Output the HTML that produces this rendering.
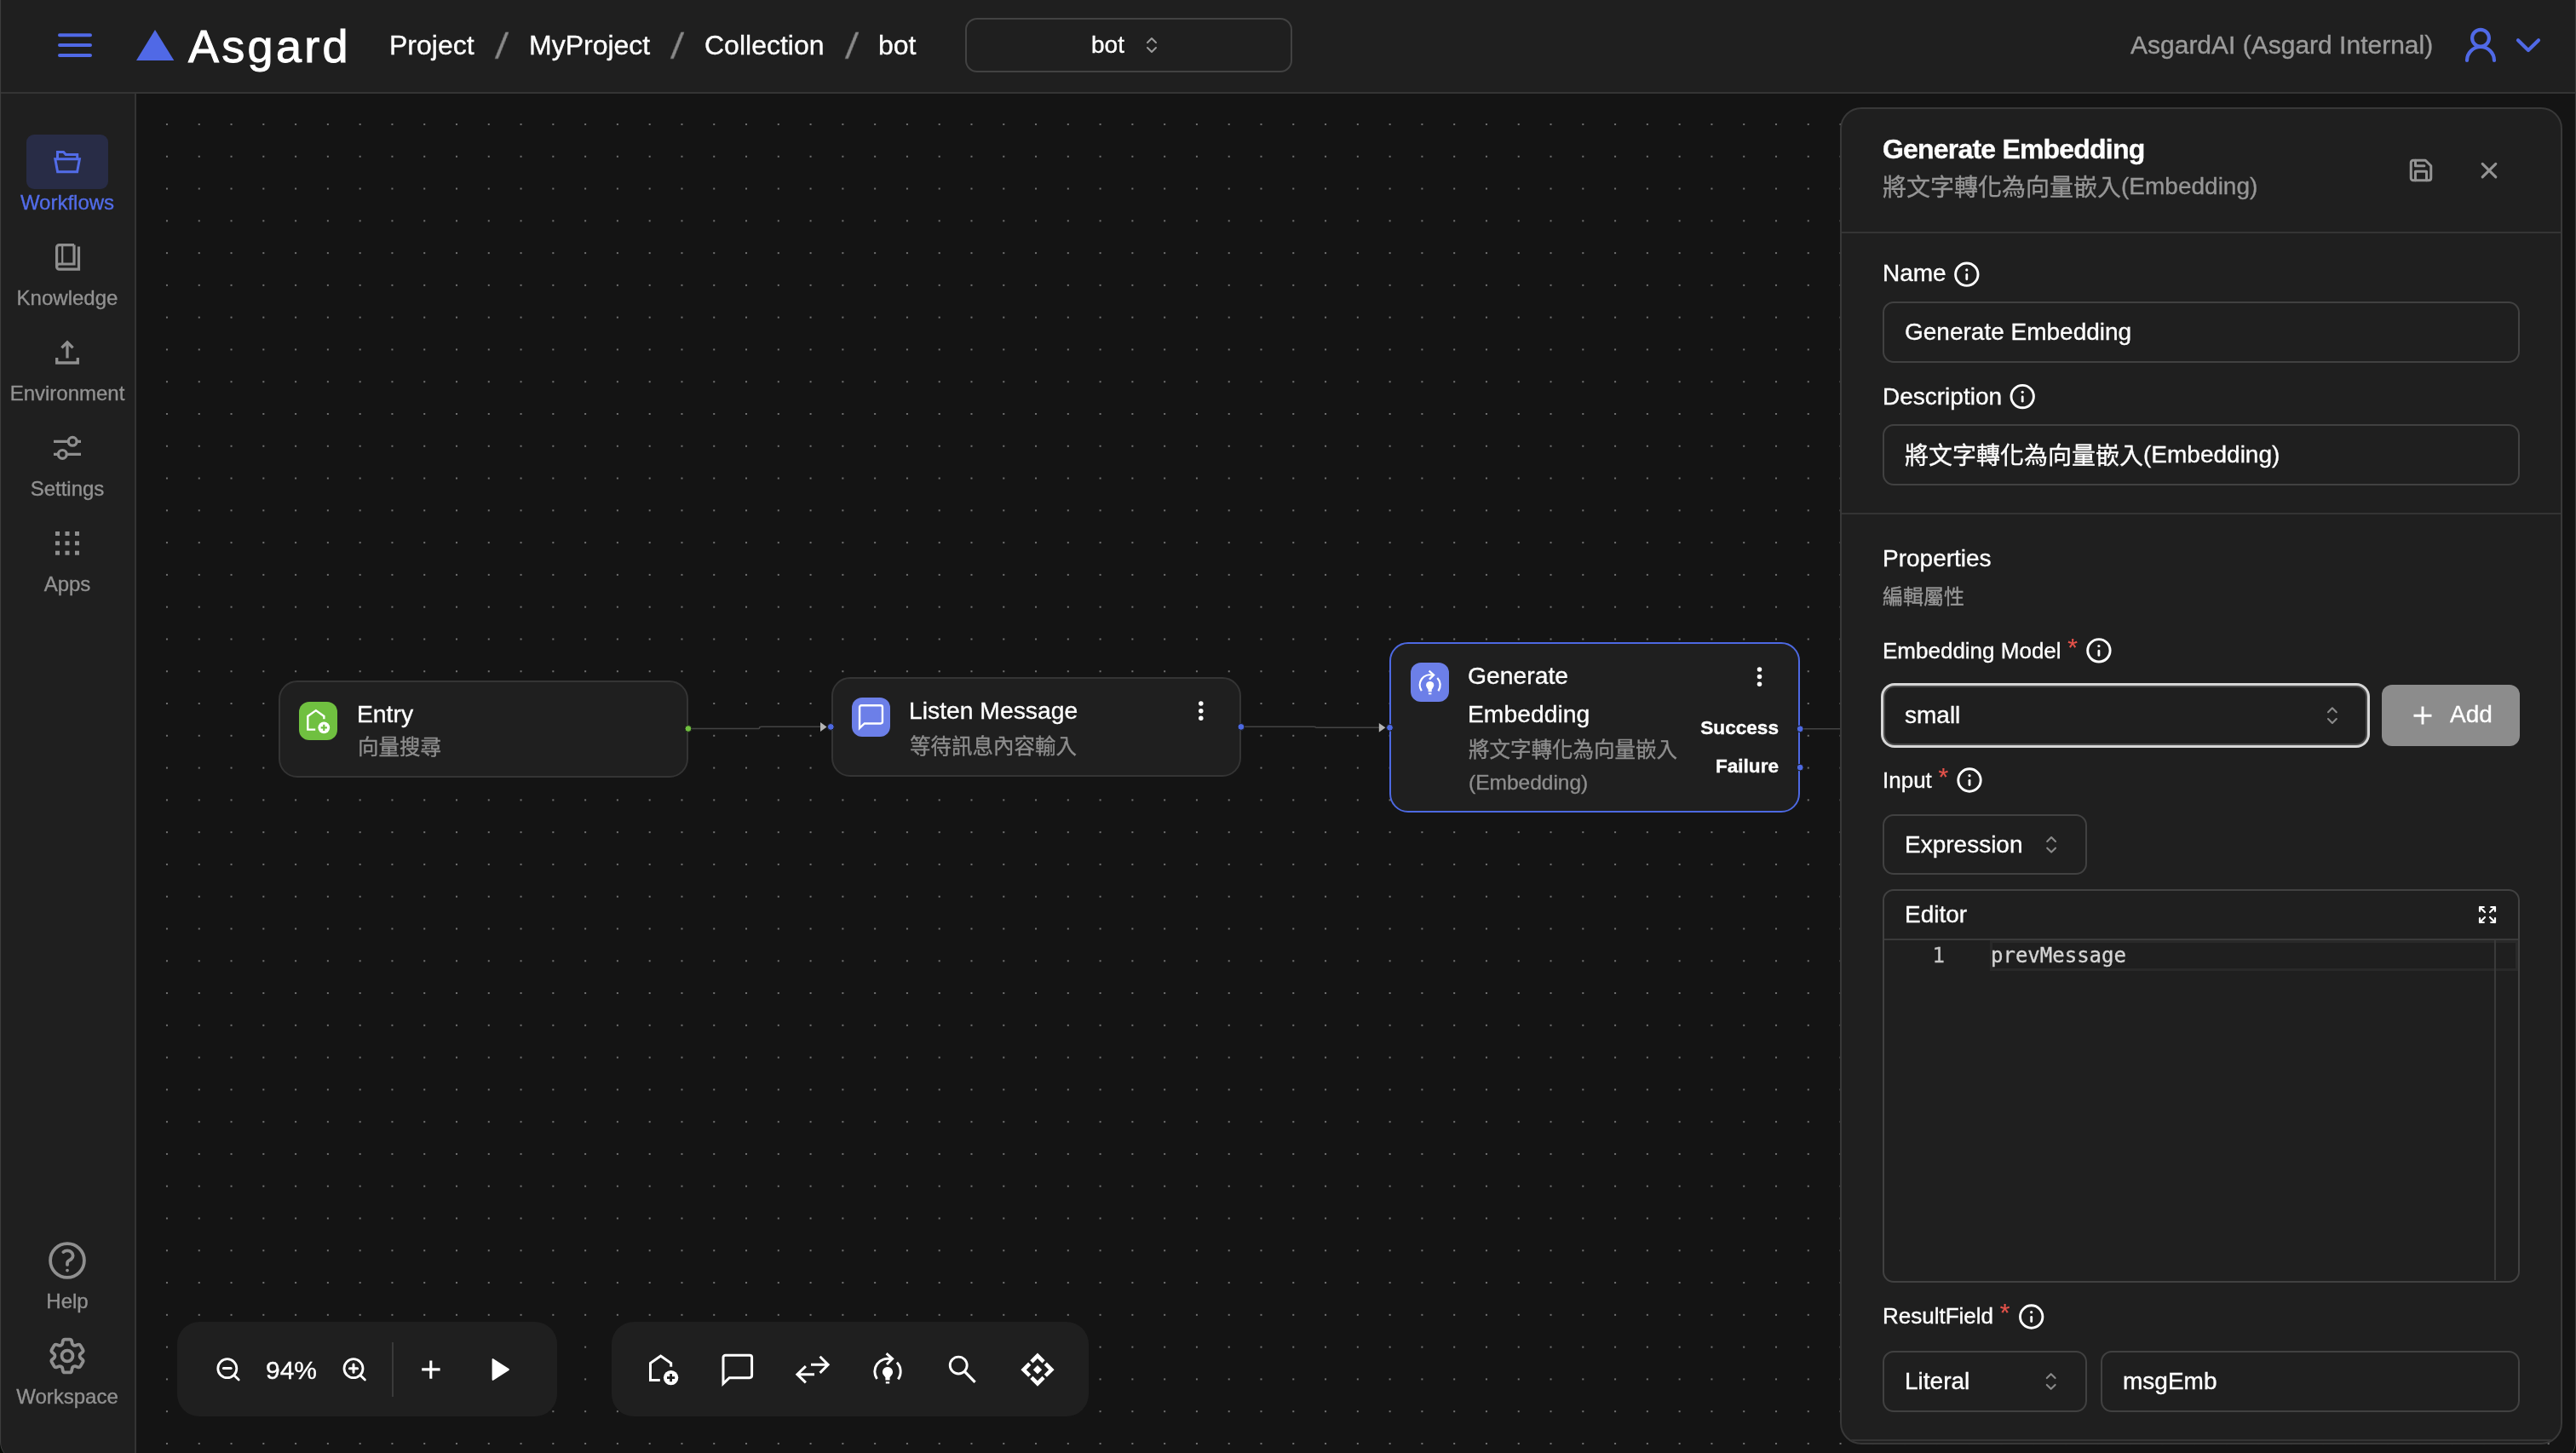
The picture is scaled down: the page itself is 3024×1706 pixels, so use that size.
<!DOCTYPE html>
<html lang="zh-Hant">
<head>
<meta charset="utf-8">
<title>Asgard</title>
<style>
*{box-sizing:border-box;margin:0;padding:0}
html,body{width:3024px;height:1706px;overflow:hidden;background:#141414}
body{position:relative;-webkit-text-stroke:0.35px;font-family:"Liberation Sans","Noto Sans CJK TC",sans-serif;color:#fff;-webkit-font-smoothing:antialiased}
.abs{position:absolute}
.t{position:absolute;white-space:nowrap;line-height:40px;height:40px;will-change:transform}
svg{position:absolute;overflow:visible}
/* header */
#header{position:absolute;left:0;top:0;width:3024px;height:110px;background:#1f1f1f;border-bottom:2px solid #343434}
#sidebar{position:absolute;left:0;top:110px;width:160px;height:1596px;background:#1f1f1f;border-right:2px solid #343434}
#canvas{position:absolute;left:160px;top:110px;width:2864px;height:1596px;background-color:#141414;overflow:hidden}
.bc{font-size:32px;color:#fff}
.sl{font-size:43px;color:#8a8a8a;transform:skewX(-7deg);transform-origin:50% 50%;-webkit-text-stroke:0.5px #8a8a8a;line-height:44px;height:44px}
.nav{will-change:transform;position:absolute;left:0;width:158px;margin-top:1px;text-align:center;font-size:24px;color:#929292;line-height:30px;height:30px}
.gray{color:#9b9b9b}

.node{position:absolute;background:#1f1f1f;border:2px solid #343434;border-radius:22px}
.node.sel{border:2.2px solid #4d69e2}
.nicon{position:absolute;width:45.4px;height:45.4px;border-radius:12px}
.nt{font-size:28.3px;color:#fff}
.nd{font-size:24.5px;color:#8e8e8e}
.nh{font-size:22.6px;font-weight:bold;text-align:right;color:#fff}

.hl{height:2px;background:#343434}
.gray2{color:#969696}
.p28{font-size:28px;color:#fff}
.p26{font-size:26px;color:#fff}
.req{color:#e5534b;font-size:30px;position:relative;top:-2.8px;margin-left:0.5px;-webkit-text-stroke:0.2px #e5534b}
.inp{border:2px solid #414141;border-radius:13px;background:#1f1f1f}
.mono{font-family:"DejaVu Sans Mono","Liberation Mono",monospace;font-size:24px;line-height:40px}
.cj{position:relative;top:1.6px}
</style>
</head>
<body>
<div id="canvas"><svg style="left:0;top:0" width="2864" height="1596"><defs><pattern id="dots" width="37.78" height="37.78" patternUnits="userSpaceOnUse" patternTransform="translate(-2.8 -2.8)"><rect x="0" y="0" width="2" height="2" fill="#6f6f6f"/></pattern></defs><rect width="2864" height="1596" fill="url(#dots)"/></svg></div>
<div id="header"></div>
<div id="sidebar"></div>
<!--HEADER-->
<!-- hamburger -->
<svg style="left:66px;top:37px" width="44" height="32" viewBox="66 37 44 32"><g stroke="#5069e6" stroke-width="4" stroke-linecap="round"><path d="M70 41.2H106M70 53H106M70 64.9H106"/></g></svg>
<!-- logo -->
<svg style="left:158px;top:33px" width="48" height="40" viewBox="158 33 48 40"><path d="M182 35L204.3 71H160Z" fill="#5069e6"/></svg>
<div class="t" id="brand" style="left:220.8px;top:23.6px;font-size:54px;line-height:60px;height:60px;letter-spacing:3.3px;-webkit-text-stroke:1px #fff">Asgard</div>
<div class="t bc" style="left:456.5px;top:33px">Project</div>
<div class="t sl" style="left:583.3px;top:31.5px">/</div>
<div class="t bc" style="left:620.5px;top:33px">MyProject</div>
<div class="t sl" style="left:789.3px;top:31.5px">/</div>
<div class="t bc" style="left:826.5px;top:33px">Collection</div>
<div class="t sl" style="left:994.3px;top:31.5px">/</div>
<div class="t bc" style="left:1030.5px;top:33px">bot</div>
<div class="abs" style="left:1133px;top:21px;width:384px;height:64px;border:2px solid #424242;border-radius:14px"></div>
<div class="t" style="left:1281px;top:33px;font-size:28px">bot</div>
<svg class="ud" style="left:1344px;top:42px" width="16" height="22" viewBox="0 0 16 22"><path d="M3 8L8 3L13 8M3 14L8 19L13 14" fill="none" stroke="#9b9b9b" stroke-width="2" stroke-linecap="round" stroke-linejoin="round"/></svg>
<div class="t gray" style="left:2501px;top:33px;font-size:30px">AsgardAI (Asgard Internal)</div>
<svg style="left:2890px;top:30px" width="44" height="46" viewBox="2890 30 44 46"><g fill="none" stroke="#5069e6" stroke-width="4.2" stroke-linecap="round"><circle cx="2912" cy="44.8" r="9.9"/><path d="M2896 71A16 16 0 0 1 2928 71"/></g></svg>
<svg style="left:2950px;top:40px" width="36" height="26" viewBox="2950 40 36 26"><path d="M2956 47.3L2968 59L2980 47.3" fill="none" stroke="#5069e6" stroke-width="4.2" stroke-linecap="round" stroke-linejoin="round"/></svg>

<!--SIDEBAR-->
<div class="abs" style="left:31px;top:158px;width:96px;height:64px;border-radius:9px;background:#282c46"></div>
<svg style="left:60px;top:172px" width="40" height="36" viewBox="60 172 40 36"><g fill="none" stroke="#526ce8" stroke-width="3"><path d="M67.5 186.5V178.5H74.6L77.2 181.5H90.7V186.5"/><path d="M64.8 186.7H93.4L90.6 201.7H67.6Z"/></g></svg>
<div class="nav" style="top:222px;color:#526ce8">Workflows</div>
<svg style="left:60px;top:282px" width="40" height="40" viewBox="60 282 40 40"><g fill="none" stroke="#8f8f8f"><path stroke-width="3.2" d="M87 287.6H69.6A3 3 0 0 0 66.6 290.6V313.2A3 3 0 0 0 69.6 316.2H92.5V289.5"/><path stroke-width="3.2" d="M87 287.6V310H69.6A3 3 0 0 0 66.6 313"/><path stroke-width="2.2" d="M73.2 288V310"/></g></svg>
<div class="nav" style="top:334px">Knowledge</div>
<svg style="left:60px;top:396px" width="40" height="36" viewBox="60 396 40 36"><g fill="none" stroke="#8f8f8f" stroke-width="3.3"><path d="M66.7 420V426H91.3V420"/><path d="M79 420.5V402.5"/><path d="M72.4 408.4L79 401.8L85.6 408.4"/></g></svg>
<div class="nav" style="top:446px">Environment</div>
<svg style="left:60px;top:508px" width="40" height="36" viewBox="60 508 40 36"><g fill="none" stroke="#8f8f8f" stroke-width="3.2"><path d="M63 518.3H80M90.4 518.3H95"/><circle cx="85.2" cy="518.3" r="4.9"/><path d="M63 533.4H68.2M78.5 533.4H95"/><circle cx="73.3" cy="533.4" r="4.9"/></g></svg>
<div class="nav" style="top:558px">Settings</div>
<svg style="left:60px;top:620px" width="40" height="36" viewBox="60 620 40 36"><g fill="#8f8f8f"><rect x="65" y="624" width="5" height="5"/><rect x="76.5" y="624" width="5" height="5"/><rect x="88" y="624" width="5" height="5"/><rect x="65" y="635.3" width="5" height="5"/><rect x="76.5" y="635.3" width="5" height="5"/><rect x="88" y="635.3" width="5" height="5"/><rect x="65" y="646.7" width="5" height="5"/><rect x="76.5" y="646.7" width="5" height="5"/><rect x="88" y="646.7" width="5" height="5"/></g></svg>
<div class="nav" style="top:670px">Apps</div>
<svg style="left:49px;top:1450px" width="60" height="60" viewBox="49 1450 60 60"><g transform="translate(79 1480) scale(2.21) translate(-12 -12)" fill="none" stroke="#8f8f8f" stroke-width="1.72" stroke-linecap="round" stroke-linejoin="round"><path d="M9.879 7.519c1.171-1.025 3.071-1.025 4.242 0 1.172 1.025 1.172 2.687 0 3.712-.203.179-.43.326-.67.442-.745.361-1.45.999-1.45 1.827v.75M21 12a9 9 0 1 1-18 0 9 9 0 0 1 18 0Zm-9 5.25h.008v.008H12v-.008Z"/></g></svg>
<div class="nav" style="top:1512px">Help</div>
<svg style="left:49px;top:1562px" width="60" height="60" viewBox="49 1562 60 60"><g transform="translate(79 1592) scale(2.16) translate(-12 -12)" fill="none" stroke="#8f8f8f" stroke-width="1.75" stroke-linecap="round" stroke-linejoin="round"><path d="M9.594 3.94c.09-.542.56-.94 1.11-.94h2.593c.55 0 1.02.398 1.11.94l.213 1.281c.063.374.313.686.645.87.074.04.147.083.22.127.325.196.72.257 1.075.124l1.217-.456a1.125 1.125 0 0 1 1.37.49l1.296 2.247a1.125 1.125 0 0 1-.26 1.431l-1.003.827c-.293.241-.438.613-.43.992a7.723 7.723 0 0 1 0 .255c-.008.378.137.75.43.991l1.004.827c.424.35.534.955.26 1.43l-1.298 2.247a1.125 1.125 0 0 1-1.369.491l-1.217-.456c-.355-.133-.75-.072-1.076.124a6.47 6.47 0 0 1-.22.128c-.331.183-.581.495-.644.869l-.213 1.281c-.09.543-.56.94-1.11.94h-2.594c-.55 0-1.019-.398-1.11-.94l-.213-1.281c-.062-.374-.312-.686-.644-.87a6.52 6.52 0 0 1-.22-.127c-.325-.196-.72-.257-1.076-.124l-1.217.456a1.125 1.125 0 0 1-1.369-.49l-1.297-2.247a1.125 1.125 0 0 1 .26-1.431l1.004-.827c.292-.24.437-.613.43-.991a6.932 6.932 0 0 1 0-.255c.007-.38-.138-.751-.43-.992l-1.004-.827a1.125 1.125 0 0 1-.26-1.43l1.297-2.247a1.125 1.125 0 0 1 1.37-.491l1.216.456c.356.133.751.072 1.076-.124.072-.044.146-.086.22-.128.332-.183.582-.495.644-.869l.214-1.28Z"/><path d="M15 12a3 3 0 1 1-6 0 3 3 0 0 1 6 0Z"/></g></svg>
<div class="nav" style="top:1624px">Workspace</div>

<!--NODES-->
<svg style="left:0;top:700px" width="2300" height="300" viewBox="0 700 2300 300">
 <g fill="none" stroke="#444" stroke-width="1.6">
  <path d="M808 855.5H889.5Q891.6 855.5 891.6 854.4T893.7 853.3H965"/>
  <path d="M1457 853.3H1542Q1544.4 853.3 1544.4 853.8T1546.8 854.3H1620"/>
  <path d="M2113 855.8H2161"/>
 </g>
 <path d="M963 848.1L970.6 853.5L963 859Z" fill="#b4b4b4"/>
 <path d="M1618.8 849L1626.4 854.3L1618.8 859.7Z" fill="#b4b4b4"/>
</svg>
<div class="node" style="left:326.5px;top:799.3px;width:481.3px;height:113.4px"></div>
<div class="node" style="left:975.6px;top:794.7px;width:481.3px;height:116.9px"></div>
<div class="node sel" style="left:1631.3px;top:753.9px;width:481.6px;height:200.4px"></div>
<div class="nicon" style="left:351px;top:823.7px;background:#70c040"></div>
<div class="nicon" style="left:999.8px;top:819.3px;background:#6c7fe8"></div>
<div class="nicon" style="left:1655.8px;top:778.4px;background:#6c7fe8"></div>
<div class="t nt" style="left:418.8px;top:818.3px">Entry</div>
<div class="t nd" style="left:419.5px;top:857.5px">向量搜尋</div>
<div class="t nt" style="left:1067.1px;top:814.1px">Listen Message</div>
<div class="t nd" style="left:1067.8px;top:856.5px">等待訊息內容輸入</div>
<div class="t nt" style="left:1723.1px;top:773.1px">Generate</div>
<div class="t nt" style="left:1723.1px;top:818px">Embedding</div>
<div class="t nd" style="left:1723.8px;top:861px">將文字轉化為向量嵌入</div>
<div class="t nd" style="left:1723.8px;top:898.6px">(Embedding)</div>
<div class="t nh" style="left:1960px;width:128px;top:834.5px">Success</div>
<div class="t nh" style="left:1960px;width:128px;top:879.5px">Failure</div>
<svg style="left:0;top:700px" width="2300" height="300" viewBox="0 700 2300 300">
 <g transform="translate(373.60 846.90) scale(0.7870) translate(-779.10 -1608.20)"><g fill="none" stroke="#fff" stroke-width="3"><path d="M774.8 1620.5H763.5V1600.6L775.6 1592L787.7 1600.6V1604.8"/></g><circle cx="787.6" cy="1617.6" r="8.7" fill="#fff"/><path d="M783 1617.6H792.2M787.6 1613V1622.2" stroke="#70c040" stroke-width="2.8" fill="none"/></g> <g transform="translate(1022.50 841.60) scale(0.8000) translate(-865.80 -1607.90)"><path d="M851.6 1591.2H880A2.6 2.6 0 0 1 882.6 1593.8V1615.1A2.6 2.6 0 0 1 880 1617.7H856.2L849 1624.6V1593.8A2.6 2.6 0 0 1 851.6 1591.2Z" fill="none" stroke="#fff" stroke-width="3"/></g> <g transform="translate(1678.60 801.50) scale(0.7870) translate(-1041.90 -1606.90)"><g fill="none" stroke="#fff" stroke-width="2.9"><path d="M1029.49 1619.03A15.2 15.2 0 0 1 1046.19 1595.79"/><path d="M1052.93 1599.84A15.2 15.2 0 0 1 1054.30 1619.33"/><path d="M1040.6 1589.2L1047.6 1595.4L1041 1602"/></g><path d="M1042 1604.9A5.95 5.95 0 0 1 1046.3 1615L1044.6 1617.3V1620.6H1039.4V1617.3L1037.7 1615A5.95 5.95 0 0 1 1042 1604.9Z" fill="#fff"/><rect x="1039.8" y="1622.2" width="4.4" height="2.3" fill="#fff"/></g>
 <g fill="#fff"><circle cx="1409.8" cy="826.1" r="2.75"/><circle cx="1409.8" cy="834.7" r="2.75"/><circle cx="1409.8" cy="843.3" r="2.75"/>
 <circle cx="2065.5" cy="785.9" r="2.75"/><circle cx="2065.5" cy="794.6" r="2.75"/><circle cx="2065.5" cy="803.3" r="2.75"/></g>
 <circle cx="807.9" cy="855.5" r="3.9" fill="#70c040" stroke="#1a1a1a" stroke-width="1"/>
 <g fill="#4d69e2" stroke="#1a1a1a" stroke-width="1"><circle cx="975.3" cy="853.4" r="3.9"/><circle cx="1456.9" cy="853.4" r="3.9"/><circle cx="1631.5" cy="854.3" r="3.9"/><circle cx="2113.2" cy="855.8" r="3.9"/><circle cx="2113.2" cy="901.1" r="3.9"/></g>
</svg>

<!--TOOLBAR-->
<div class="abs" style="left:208px;top:1552px;width:446px;height:111px;border-radius:26px;background:#1f1f1f"></div>
<div class="abs" style="left:718px;top:1552px;width:560px;height:111px;border-radius:26px;background:#1f1f1f"></div>
<div class="abs" style="left:460px;top:1576px;width:2px;height:64px;background:#3a3a3a"></div>
<div class="t" style="left:312px;top:1589px;font-size:30px;width:60px;text-align:center">94%</div>
<svg style="left:0;top:1540px" width="1400" height="140" viewBox="0 1540 1400 140">
<g fill="none" stroke="#fff" stroke-width="2.8" stroke-linecap="round">
 <circle cx="266.8" cy="1606.7" r="11"/><path d="M275 1615L280.2 1620"/><path d="M262.4 1606.6H271.2" stroke-width="3"/>
 <circle cx="415" cy="1606.7" r="11"/><path d="M423.2 1615L428.4 1620"/><path d="M410.4 1606.7H419.6M415 1602.1V1611.3" stroke-width="3"/>
</g>
<g fill="none" stroke="#fff" stroke-width="3.1"><path d="M495.2 1607.9H516.6M505.8 1597.6V1618.8"/></g>
<path d="M577.6 1596.4Q577.6 1594.4 579.4 1595.5L597.3 1606.9Q598.8 1608 597.3 1609.1L579.4 1620.5Q577.6 1621.6 577.6 1619.6Z" fill="#fff"/>
<!-- home plus -->
<g fill="none" stroke="#fff" stroke-width="3"><path d="M774.8 1620.5H763.5V1600.6L775.6 1592L787.7 1600.6V1604.8"/></g>
<circle cx="787.6" cy="1617.6" r="8.7" fill="#fff"/><path d="M783 1617.6H792.2M787.6 1613V1622.2" stroke="#1f1f1f" stroke-width="2.8" fill="none"/>
<!-- chat -->
<path d="M851.6 1591.2H880A2.6 2.6 0 0 1 882.6 1593.8V1615.1A2.6 2.6 0 0 1 880 1617.7H856.2L849 1624.6V1593.8A2.6 2.6 0 0 1 851.6 1591.2Z" fill="none" stroke="#fff" stroke-width="3" stroke-linejoin="miter"/>
<!-- swap -->
<g fill="none" stroke="#fff" stroke-width="3"><path d="M952 1602.3H971M962.6 1592.7L972.1 1602.3L962.6 1611.9"/><path d="M956 1613.7H937M945.9 1604.2L935.9 1613.7L945.9 1623.3"/></g>
<!-- model training -->
<g fill="none" stroke="#fff" stroke-width="2.9"><path d="M1029.49 1619.03A15.2 15.2 0 0 1 1046.19 1595.79"/><path d="M1052.93 1599.84A15.2 15.2 0 0 1 1054.30 1619.33"/><path d="M1040.6 1589.2L1047.6 1595.4L1041 1602"/></g>
<path d="M1042 1604.9A5.95 5.95 0 0 1 1046.3 1615L1044.6 1617.3V1620.6H1039.4V1617.3L1037.7 1615A5.95 5.95 0 0 1 1042 1604.9Z" fill="#fff"/><rect x="1039.8" y="1622.2" width="4.4" height="2.3" fill="#fff"/>
<!-- search -->
<g fill="none" stroke="#fff" stroke-width="2.9"><circle cx="1125.2" cy="1603.05" r="9.95"/><path d="M1132.4 1610.4L1144.6 1622.8" stroke-width="3.2"/></g>
<!-- diamonds -->
<path d="M1218.00 1588.55L1226.70 1597.25L1223.50 1600.45L1218.00 1594.95L1212.50 1600.45L1209.30 1597.25ZM1237.60 1608.15L1228.90 1616.85L1225.70 1613.65L1231.20 1608.15L1225.70 1602.65L1228.90 1599.45ZM1218.00 1627.75L1209.30 1619.05L1212.50 1615.85L1218.00 1621.35L1223.50 1615.85L1226.70 1619.05ZM1198.40 1608.15L1207.10 1599.45L1210.30 1602.65L1204.80 1608.15L1210.30 1613.65L1207.10 1616.85ZM1218.00 1602.95L1223.20 1608.15L1218.00 1613.35L1212.80 1608.15Z" fill="#fff"/>
</svg>

<!--PANEL-->
<div class="abs" id="panel" style="left:2160px;top:126px;width:848px;height:1570px;border:2px solid #383838;border-radius:25px;background:#1f1f1f;overflow:hidden"><div class="hl" style="position:absolute;left:0;top:1562px;width:844px"></div></div>
<div class="abs hl" style="left:2162px;top:272px;width:844px"></div>
<div class="abs hl" style="left:2162px;top:602px;width:844px"></div>
<div class="t" style="left:2210px;top:155px;font-size:32px;font-weight:bold;letter-spacing:-0.8px">Generate Embedding</div>
<div class="t gray2" style="left:2210px;top:198.8px;font-size:28px"><span class="cj">將文字轉化為向量嵌入</span>(Embedding)</div>
<div class="t p28" style="left:2209.6px;top:301.4px">Name</div>
<div class="abs inp" style="left:2210px;top:354px;width:748px;height:72px"></div>
<div class="t p28" style="left:2235.6px;top:369.7px">Generate Embedding</div>
<div class="t p28" style="left:2209.6px;top:446px">Description</div>
<div class="abs inp" style="left:2210px;top:498px;width:748px;height:72px"></div>
<div class="t p28" style="left:2235.6px;top:514px"><span class="cj">將文字轉化為向量嵌入</span>(Embedding)</div>
<div class="t p28" style="left:2209.6px;top:635.9px">Properties</div>
<div class="t gray2" style="left:2210px;top:680.5px;font-size:24px">編輯屬性</div>
<div class="t p26" style="left:2209.6px;top:742.8px">Embedding Model <span class="req">*</span></div>
<div class="abs inp" style="left:2211px;top:805px;width:568px;height:70px;box-shadow:0 0 0 3px #d6d6d6;border-color:#4a4a4a"></div>
<div class="t p28" style="left:2235.6px;top:820px">small</div>
<div class="abs" style="left:2796px;top:804px;width:162px;height:72px;border-radius:12px;background:#8c8c8c"></div>
<div class="t p28" style="left:2875.6px;top:819.3px">Add</div>
<div class="t p26" style="left:2209.6px;top:895.4px">Input <span class="req">*</span></div>
<div class="abs inp" style="left:2210px;top:956px;width:239.5px;height:71px"></div>
<div class="t p28" style="left:2235.6px;top:971.8px">Expression</div>
<div class="abs inp" style="left:2210px;top:1044px;width:748px;height:462px"></div>
<div class="abs" style="left:2212px;top:1102px;width:744px;height:2px;background:#3a3a3a"></div>
<div class="t p28" style="left:2235.6px;top:1053.5px">Editor</div>
<div class="abs" style="left:2336px;top:1104.2px;width:619.6px;height:35.6px;border:3.6px solid #292929"></div>
<div class="abs" style="left:2928px;top:1104px;width:1.5px;height:399px;background:#3a3a3a"></div>
<div class="t mono" style="left:2226px;width:57px;text-align:right;top:1102px;color:#c6c6c6">1</div>
<div class="t mono" style="left:2336.6px;top:1102px;color:#d4d4d4">prevMessage</div>
<div class="t p26" style="left:2209.6px;top:1524.3px">ResultField <span class="req">*</span></div>
<div class="abs inp" style="left:2210px;top:1586px;width:239.5px;height:71.5px"></div>
<div class="t p28" style="left:2235.6px;top:1601.5px">Literal</div>
<div class="abs inp" style="left:2465.5px;top:1586px;width:492.5px;height:71.5px"></div>
<div class="t p28" style="left:2492.1px;top:1601.5px">msgEmb</div>
<svg style="left:2160px;top:126px" width="864" height="1580" viewBox="2160 126 864 1580">
 <g transform="translate(2842 200) scale(1.306) translate(-12 -12)" fill="none" stroke="#949494" stroke-width="2.3" stroke-linecap="round" stroke-linejoin="round"><path d="M19 21H5a2 2 0 0 1-2-2V5a2 2 0 0 1 2-2h11l5 5v11a2 2 0 0 1-2 2z"/><path d="M17 21V13H7V21"/><path d="M7 3V8H15"/></g>
 <path d="M2914.2 192.3L2929.8 207.9M2929.8 192.3L2914.2 207.9" fill="none" stroke="#949494" stroke-width="3.1" stroke-linecap="round"/>
 <g transform="translate(2308.8 322.2)"><circle r="13.2" fill="none" stroke="#fff" stroke-width="2.9"/><path d="M0 5.6V0.3" stroke="#fff" stroke-width="2.8" stroke-linecap="round" fill="none"/><circle cy="-5.3" r="1.6" fill="#fff"/></g> <g transform="translate(2374.2 465.6)"><circle r="13.2" fill="none" stroke="#fff" stroke-width="2.9"/><path d="M0 5.6V0.3" stroke="#fff" stroke-width="2.8" stroke-linecap="round" fill="none"/><circle cy="-5.3" r="1.6" fill="#fff"/></g> <g transform="translate(2463.9 763.8)"><circle r="13.2" fill="none" stroke="#fff" stroke-width="2.9"/><path d="M0 5.6V0.3" stroke="#fff" stroke-width="2.8" stroke-linecap="round" fill="none"/><circle cy="-5.3" r="1.6" fill="#fff"/></g> <g transform="translate(2312.0 916.0)"><circle r="13.2" fill="none" stroke="#fff" stroke-width="2.9"/><path d="M0 5.6V0.3" stroke="#fff" stroke-width="2.8" stroke-linecap="round" fill="none"/><circle cy="-5.3" r="1.6" fill="#fff"/></g> <g transform="translate(2384.7 1546)"><circle r="13.2" fill="none" stroke="#fff" stroke-width="2.9"/><path d="M0 5.6V0.3" stroke="#fff" stroke-width="2.8" stroke-linecap="round" fill="none"/><circle cy="-5.3" r="1.6" fill="#fff"/></g>
 <path d="M2733.0 836.2l4.9 -4.9l4.9 4.9M2733.0 844.0l4.9 4.9l4.9 -4.9" fill="none" stroke="#8a8a8a" stroke-width="2.1" stroke-linecap="round" stroke-linejoin="round"/> <path d="M2403.2 987.9l4.9 -4.9l4.9 4.9M2403.2 995.7l4.9 4.9l4.9 -4.9" fill="none" stroke="#8a8a8a" stroke-width="2.1" stroke-linecap="round" stroke-linejoin="round"/> <path d="M2402.8 1618.1l4.9 -4.9l4.9 4.9M2402.8 1625.9l4.9 4.9l4.9 -4.9" fill="none" stroke="#8a8a8a" stroke-width="2.1" stroke-linecap="round" stroke-linejoin="round"/>
 <path d="M2833.5 840.2H2854.5M2844 829.6V850.6" stroke="#fff" stroke-width="2.9" fill="none"/>
 <g transform="translate(2920 1074) translate(-12 -12)" fill="none" stroke="#fff" stroke-width="2.2" stroke-linecap="round" stroke-linejoin="round"><path d="m21 21-6-6m6 6v-4.8m0 4.8h-4.8"/><path d="M3 16.2V21m0 0h4.8M3 21l6-6"/><path d="M21 7.8V3m0 0h-4.8M21 3l-6 6"/><path d="M3 7.8V3m0 0h4.8M3 3l6 6"/></g>
</svg>


<svg style="left:0;top:0;z-index:50;pointer-events:none" width="3024" height="1706" viewBox="0 0 3024 1706">
 <path d="M0.5 0V1693.5A21 21 0 0 0 4.6 1706" fill="none" stroke="#3c3c3c" stroke-width="1.2"/>
 <path d="M3023.5 0V1693.5A21 21 0 0 1 3019.4 1706" fill="none" stroke="#3c3c3c" stroke-width="1.2"/>
 <path d="M0 1693.5A21 21 0 0 0 4.13 1706H0Z" fill="#070b07"/>
 <path d="M3024 1693.5A21 21 0 0 1 3019.87 1706H3024Z" fill="#070b07"/>
</svg>
</body>
</html>
